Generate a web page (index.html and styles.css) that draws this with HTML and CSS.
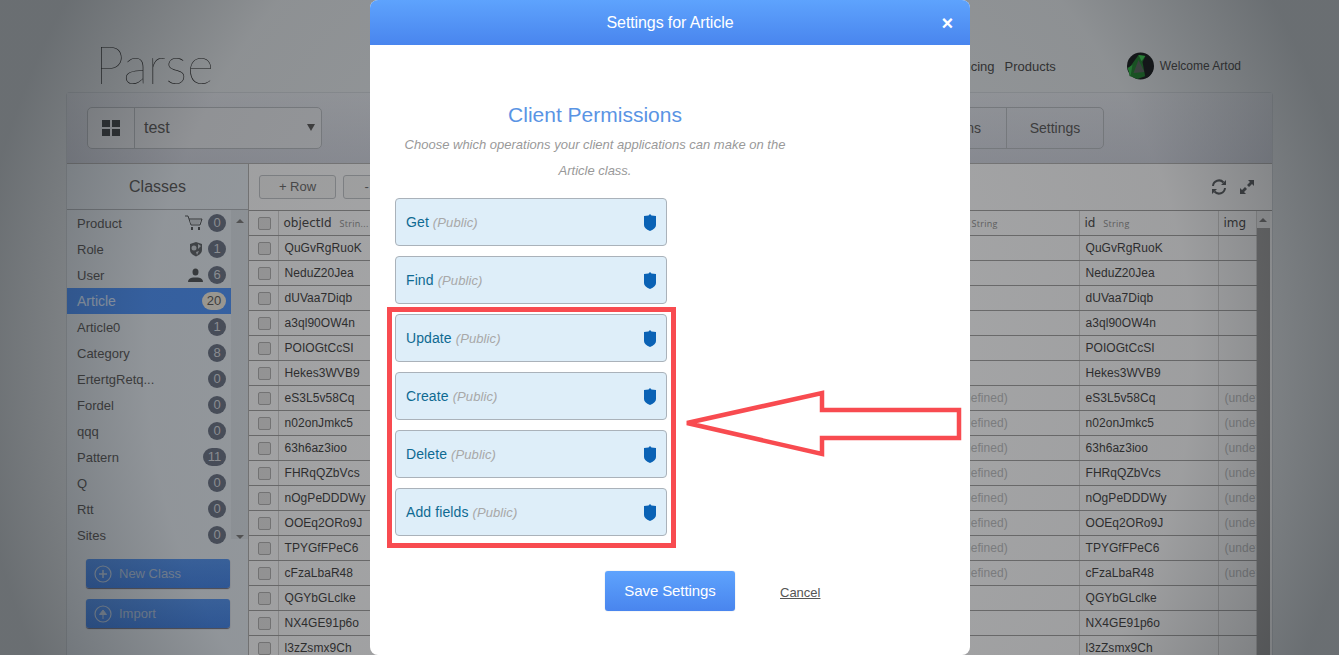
FILE: index.html
```html
<!DOCTYPE html>
<html lang="en">
<head>
    <meta charset="UTF-8">
    <meta name="viewport" content="width=device-width, initial-scale=1.0">
    <title>Settings for Article - Parse</title>
    <link rel="stylesheet" href="styles.css">
</head>
<body>
    <div class="page">
        <div class="top">
            <div class="logo">Parse</div>
            <div class="nav">
                <a>Pricing</a>
                <a>Products</a>
            </div>
            <div class="welcome">
                <svg class="avatar" viewBox="0 0 28 28" width="29" height="28">
                    <circle cx="15" cy="14" r="13.5" fill="#14181a"/>
                    <path d="M3 17 L13 3 L20 4 L23 23 L12 27 L4 24Z" fill="#1d7a2c"/>
                    <path d="M13 8 L19 20 L8 21Z" fill="#55605a"/>
                    <path d="M13 3 L20 4 L16 9Z" fill="#39c94f"/>
                    <path d="M2 16 L7 13 L5 24Z" fill="#2fb345"/>
                    <path d="M21 2 Q29 8 27 19 Q25 25 20 26 L17 10Z" fill="#14181a"/>
                </svg>
                Welcome Artod
            </div>
        </div>

        <div class="panel">
            <div class="appbar">
                <div class="appselect">
                    <div class="appicon">
                        <svg viewBox="0 0 18 16" width="18" height="16"><path d="M0 0h8v7H0zM10 0h8v7h-8zM0 9h8v7H0zM10 9h8v7h-8z" fill="#3f4346"/></svg>
                    </div>
                    <div class="appname">test</div>
                    <div class="caret"></div>
                </div>
                <div class="apptabs">
                    <div class="apptab wide">Actions</div>
                    <div class="apptab">Settings</div>
                </div>
            </div>

            <div class="columns">
                <div class="sidebar">
                    <div class="sidehead">Classes</div>
                    <div class="sidelist">
                        <div class="classes">
                            <div class="cls"><span class="name">Product</span>
                                <svg class="clsicon" viewBox="0 0 18 16" width="18" height="16"><path d="M0 1h3l3 9h9l2-6H4" fill="none" stroke="#4c5053" stroke-width="1"/><path d="M5 5h11l-2 4H6z" fill="#c4cacf"/><path d="M6 12h2v3H6zM13 12h2v3h-2z" fill="#4c5053"/></svg>
                                <span class="count">0</span></div>
                            <div class="cls"><span class="name">Role</span>
                                <svg class="clsicon" viewBox="0 0 14 16" width="14" height="16"><path d="M7 1 L13 3 V9 Q13 13 7 15.500 Q1 13 1 9 V3Z" fill="#5a5f63"/><circle cx="5" cy="7" r="2.500" fill="#c4cacf"/><path d="M9 3 L12 5 L9 8Z" fill="#c4cacf"/><path d="M7 11 L10 10 L8 14Z" fill="#c4cacf"/></svg>
                                <span class="count">1</span></div>
                            <div class="cls"><span class="name">User</span>
                                <svg class="clsicon" viewBox="0 0 15 14" width="15" height="14"><ellipse cx="7.500" cy="4" rx="3" ry="3.500" fill="#4c5053"/><path d="M0 14 Q0 10 5 9.500 H10 Q15 10 15 14Z" fill="#4c5053"/></svg>
                                <span class="count">6</span></div>
                            <div class="cls active"><span class="name">Article</span><span class="count">20</span></div>
                            <div class="cls"><span class="name">Article0</span><span class="count">1</span></div>
                            <div class="cls"><span class="name">Category</span><span class="count">8</span></div>
                            <div class="cls"><span class="name">ErtertgRetq...</span><span class="count">0</span></div>
                            <div class="cls"><span class="name">Fordel</span><span class="count">0</span></div>
                            <div class="cls"><span class="name">qqq</span><span class="count">0</span></div>
                            <div class="cls"><span class="name">Pattern</span><span class="count">11</span></div>
                            <div class="cls"><span class="name">Q</span><span class="count">0</span></div>
                            <div class="cls"><span class="name">Rtt</span><span class="count">0</span></div>
                            <div class="cls"><span class="name">Sites</span><span class="count">0</span></div>
                        </div>
                        <div class="sidescroll">
                            <div class="tri up"></div>
                            <div class="tri down"></div>
                        </div>
                    </div>
                    <div class="sidebtn">
                        <svg viewBox="0 0 18 18" width="18" height="18"><circle cx="9" cy="9" r="8" fill="none" stroke="#b4c6dc" stroke-width="1.200"/><path d="M9 5v8M5 9h8" stroke="#b4c6dc" stroke-width="1.500"/></svg>
                        New Class
                    </div>
                    <div class="sidebtn">
                        <svg viewBox="0 0 18 18" width="18" height="18"><circle cx="9" cy="9" r="8" fill="none" stroke="#b4c6dc" stroke-width="1.200"/><path d="M9 14V7M5.500 9.500 9 5l3.500 4.500z" fill="#b4c6dc" stroke="#b4c6dc"/></svg>
                        Import
                    </div>
                </div>

                <div class="data">
                    <div class="toolbar">
                        <div class="toolbtn">+ Row</div>
                        <div class="toolbtn">- Row</div>
                        <div class="tools">
                            <svg viewBox="0 0 16 16" width="16" height="16"><path d="M2 7 A6 6 0 0 1 12.500 3.500 M14 9 A6 6 0 0 1 3.500 12.500" fill="none" stroke="#55595c" stroke-width="2"/><path d="M10 6h5V1zM6 10H1v5z" fill="#55595c"/></svg>
                            <svg viewBox="0 0 16 16" width="16" height="16"><path d="M9 1h6v6l-2-2-3 3-2-2 3-3zM7 15H1V9l2 2 3-3 2 2-3 3z" fill="#55595c"/></svg>
                        </div>
                    </div>
                    <div class="tablewrap">
                        <table class="grid">
                            <colgroup>
                                <col class="c-check"><col class="c-id"><col class="c-mid"><col class="c-id"><col class="c-id"><col class="c-img">
                            </colgroup>
                            <thead>
                                <tr>
                                    <th><span class="box"></span></th>
                                    <th>objectId <small>Strin...</small></th>
                                    <th></th>
                                    <th class="strcol"><small>String</small></th>
                                    <th>id <small>String</small></th>
                                    <th>img</th>
                                </tr>
                            </thead>
                            <tbody>
                                <tr><td><span class="box"></span></td><td>QuGvRgRuoK</td><td></td><td></td><td>QuGvRgRuoK</td><td></td></tr>
                                <tr><td><span class="box"></span></td><td>NeduZ20Jea</td><td></td><td></td><td>NeduZ20Jea</td><td></td></tr>
                                <tr><td><span class="box"></span></td><td>dUVaa7Diqb</td><td></td><td></td><td>dUVaa7Diqb</td><td></td></tr>
                                <tr><td><span class="box"></span></td><td>a3ql90OW4n</td><td></td><td></td><td>a3ql90OW4n</td><td></td></tr>
                                <tr><td><span class="box"></span></td><td>POIOGtCcSI</td><td></td><td></td><td>POIOGtCcSI</td><td></td></tr>
                                <tr><td><span class="box"></span></td><td>Hekes3WVB9</td><td></td><td></td><td>Hekes3WVB9</td><td></td></tr>
                                <tr><td><span class="box"></span></td><td>eS3L5v58Cq</td><td></td><td class="undef">(undefined)</td><td>eS3L5v58Cq</td><td class="undef">(undefined)</td></tr>
                                <tr><td><span class="box"></span></td><td>n02onJmkc5</td><td></td><td class="undef">(undefined)</td><td>n02onJmkc5</td><td class="undef">(undefined)</td></tr>
                                <tr><td><span class="box"></span></td><td>63h6az3ioo</td><td></td><td class="undef">(undefined)</td><td>63h6az3ioo</td><td class="undef">(undefined)</td></tr>
                                <tr><td><span class="box"></span></td><td>FHRqQZbVcs</td><td></td><td class="undef">(undefined)</td><td>FHRqQZbVcs</td><td class="undef">(undefined)</td></tr>
                                <tr><td><span class="box"></span></td><td>nOgPeDDDWy</td><td></td><td class="undef">(undefined)</td><td>nOgPeDDDWy</td><td class="undef">(undefined)</td></tr>
                                <tr><td><span class="box"></span></td><td>OOEq2ORo9J</td><td></td><td class="undef">(undefined)</td><td>OOEq2ORo9J</td><td class="undef">(undefined)</td></tr>
                                <tr><td><span class="box"></span></td><td>TPYGfFPeC6</td><td></td><td class="undef">(undefined)</td><td>TPYGfFPeC6</td><td class="undef">(undefined)</td></tr>
                                <tr><td><span class="box"></span></td><td>cFzaLbaR48</td><td></td><td class="undef">(undefined)</td><td>cFzaLbaR48</td><td class="undef">(undefined)</td></tr>
                                <tr><td><span class="box"></span></td><td>QGYbGLclke</td><td></td><td></td><td>QGYbGLclke</td><td></td></tr>
                                <tr><td><span class="box"></span></td><td>NX4GE91p6o</td><td></td><td></td><td>NX4GE91p6o</td><td></td></tr>
                                <tr><td><span class="box"></span></td><td>l3zZsmx9Ch</td><td></td><td></td><td>l3zZsmx9Ch</td><td></td></tr>
                            </tbody>
                        </table>
                        <div class="tablescroll">
                            <div class="tri up"></div>
                            <div class="thumb"></div>
                        </div>
                    </div>
                </div>
            </div>
        </div>
    </div>

    <div class="dim"></div>

    <div class="modal">
        <div class="modalhead">
            <span>Settings for Article</span>
            <span class="close">&times;</span>
        </div>
        <div class="modalbody">
            <div class="intro">
                <h2>Client Permissions</h2>
                <p>Choose which operations your client applications can make on the Article class.</p>
            </div>
            <div class="perms">
                <div class="perm"><span>Get <em>(Public)</em></span><svg class="shield" viewBox="0 0 12 17" width="12" height="17"><path d="M6 0 L7.500 1.500 L12 2 V11 Q12 14.500 6 17 Q0 14.500 0 11 V2 L4.500 1.500Z"/></svg></div>
                <div class="perm"><span>Find <em>(Public)</em></span><svg class="shield" viewBox="0 0 12 17" width="12" height="17"><path d="M6 0 L7.500 1.500 L12 2 V11 Q12 14.500 6 17 Q0 14.500 0 11 V2 L4.500 1.500Z"/></svg></div>
                <div class="perm"><span>Update <em>(Public)</em></span><svg class="shield" viewBox="0 0 12 17" width="12" height="17"><path d="M6 0 L7.500 1.500 L12 2 V11 Q12 14.500 6 17 Q0 14.500 0 11 V2 L4.500 1.500Z"/></svg></div>
                <div class="perm"><span>Create <em>(Public)</em></span><svg class="shield" viewBox="0 0 12 17" width="12" height="17"><path d="M6 0 L7.500 1.500 L12 2 V11 Q12 14.500 6 17 Q0 14.500 0 11 V2 L4.500 1.500Z"/></svg></div>
                <div class="perm"><span>Delete <em>(Public)</em></span><svg class="shield" viewBox="0 0 12 17" width="12" height="17"><path d="M6 0 L7.500 1.500 L12 2 V11 Q12 14.500 6 17 Q0 14.500 0 11 V2 L4.500 1.500Z"/></svg></div>
                <div class="perm"><span>Add fields <em>(Public)</em></span><svg class="shield" viewBox="0 0 12 17" width="12" height="17"><path d="M6 0 L7.500 1.500 L12 2 V11 Q12 14.500 6 17 Q0 14.500 0 11 V2 L4.500 1.500Z"/></svg></div>
            </div>
            <div class="actions">
                <div class="save">Save Settings</div>
                <a class="cancel">Cancel</a>
            </div>
        </div>
    </div>

    <div class="redbox"></div>
    <svg class="redarrow" viewBox="0 0 280 68" width="280" height="68">
        <path d="M3 33 L138 3 V20 H275 V48 H138 V64Z" fill="none" stroke="#f84b50" stroke-width="4.500"/>
    </svg>
</body>
</html>
```

FILE: styles.css
```css
html, body {
    height: 100%;
}
body {
    margin: 0;
    overflow: hidden;
    position: relative;
    background: #d8dde0;
    font-family: "Liberation Sans", Arial, sans-serif;
    color: #444;
}
.page {
    padding: 0 66px;
    height: 655px;
    overflow: hidden;
}
.top {
    height: 92px;
    display: flex;
    align-items: center;
    padding-left: 29px;
    padding-top: 40px;
    box-sizing: border-box;
    font-size: 12px;
}
.logo {
    font-family: Lato, sans-serif;
    font-weight: 100;
    font-size: 52px;
    color: #111;
    flex: 1;
    line-height: 50px;
    margin-top: -4px;
}
.nav {
    display: flex;
    gap: 10px;
    margin-right: 69px;
    font-size: 13px;
}
.welcome {
    display: flex;
    align-items: center;
    gap: 6px;
    margin-right: 32px;
}
.panel {
    border: 1px solid #c5cbd0;
    border-bottom: 0;
    border-radius: 4px 4px 0 0;
    box-sizing: border-box;
    width: 1207px;
}
.appbar {
    height: 69px;
    background: linear-gradient(#d8dce2, #c8ccd6);
    border-bottom: 1px solid #aaa;
    display: flex;
    justify-content: space-between;
    align-items: center;
    padding: 0 168px 1px 20px;
}
.appselect {
    display: flex;
    align-items: center;
    width: 235px;
    height: 42px;
    box-sizing: border-box;
    border: 1px solid #aeb3b8;
    border-radius: 5px;
    background: #dcdfe3;
}
.appicon {
    width: 46px;
    height: 100%;
    border-right: 1px solid #aeb3b8;
    display: flex;
    align-items: center;
    justify-content: center;
}
.appname {
    padding: 1px 0 0 9px;
    font-size: 16px;
    color: #555;
    flex: 1;
}
.caret {
    border: 4px solid transparent;
    border-top: 7px solid #555;
    border-bottom: 0;
    margin-right: 6px;
}
.apptabs {
    display: flex;
    height: 40px;
    border: 1px solid #aeb3b8;
    border-radius: 5px;
    font-size: 14px;
    color: #555;
}
.apptab {
    width: 96px;
    padding-top: 1px;
    display: flex;
    align-items: center;
    justify-content: center;
}
.apptab.wide {
    border-right: 1px solid #aeb3b8;
}
.columns {
    display: flex;
}
.sidebar {
    width: 181px;
    border-right: 1px solid #aaa;
    background: #dde4ea;
    height: 500px;
}
.sidehead {
    height: 45px;
    line-height: 46px;
    text-align: center;
    font-size: 16px;
    color: #555;
    border-bottom: 1px solid #a8adb2;
}
.sidelist {
    display: flex;
}
.classes {
    width: 164px;
}
.cls {
    height: 26px;
    display: flex;
    align-items: center;
    gap: 5px;
    padding: 0 5px 0 10px;
    font-size: 13px;
    color: #555;
    box-sizing: border-box;
}
.cls .name {
    flex: 1;
}
.cls.active {
    background: #4a8ef2;
    color: #cfe0f8;
    font-size: 14px;
}
.count {
    min-width: 18px;
    height: 18px;
    border-radius: 9px;
    background: #666f80;
    color: #d0d4da;
    font-size: 13px;
    line-height: 18px;
    text-align: center;
}
.cls:nth-child(10) .count {
    min-width: 23px;
}
.active .count {
    min-width: 24px;
    background: #e9e4d8;
    color: #555;
}
.sidescroll {
    flex: 1;
    display: flex;
    flex-direction: column;
    justify-content: space-between;
    align-items: center;
    padding: 9px 0 0;
    height: 329px;
    box-sizing: border-box;
    background: #d3dae0;
}
.tri.up {
    border: 4px solid transparent;
    border-bottom: 4px solid #777;
    border-top: 0;
}
.tri.down {
    border: 4px solid transparent;
    border-top: 4px solid #777;
    border-bottom: 0;
}
.sidebtn {
    margin: 11px 18px 11px 19px;
    height: 29px;
    border-radius: 3px;
    background: linear-gradient(#4f8ee8, #3f7fe0);
    color: #a9bed8;
    font-size: 13px;
    display: flex;
    align-items: center;
    gap: 7px;
    padding-left: 8px;
    box-shadow: 0 1px 1px #667;
}
.data {
    flex: 1;
    min-width: 0;
    background: #f2f3f4;
}
.toolbar {
    height: 46px;
    display: flex;
    align-items: center;
    gap: 7px;
    padding: 0 17px 0 10px;
    border-bottom: 1px solid #999;
}
.toolbtn {
    width: 77px;
    height: 24px;
    box-sizing: border-box;
    border: 1px solid #b8bcc0;
    border-radius: 3px;
    background: #eceded;
    font-size: 13px;
    color: #666;
    text-align: center;
    line-height: 22px;
}
.tools {
    margin-left: auto;
    display: flex;
    gap: 12px;
}
.tablewrap {
    display: flex;
}
.grid {
    table-layout: fixed;
    width: 1007px;
    border-collapse: collapse;
    font-size: 12px;
    letter-spacing: .05px;
    color: #3c3c3c;
}
.c-check { width: 29px; }
.c-id { width: 139px; }
.c-mid { width: 523px; }
.c-img { width: 38px; }
.grid th, .grid td {
    height: 24px;
    padding: 0 6px;
    border-bottom: 1px solid #999;
    border-right: 1px solid #ccc;
    text-align: left;
    white-space: nowrap;
    overflow: hidden;
}
.grid th:first-child, .grid td:first-child {
    padding: 0 0 0 9px;
}
.grid th {
    font-family: "DejaVu Sans", sans-serif;
    font-weight: normal;
    font-size: 12px;
    color: #444;
    letter-spacing: 0;
    padding-left: 5px;
}
.grid th small {
    font-family: "Open Sans", sans-serif;
    font-size: 9px;
    color: #888;
    letter-spacing: .3px;
    margin-left: 4px;
}
.grid .strcol small {
    display: block;
    margin-left: 26px;
}
.grid .undef {
    color: #b4b6b8;
}
.grid td:nth-child(4) {
    text-align: right;
    padding-right: 71px;
    overflow: visible;
}
.box {
    display: block;
    width: 11px;
    height: 11px;
    border: 1px solid #aaa;
    border-radius: 2px;
    background: #ddd;
}
.tablescroll {
    width: 13px;
    background: #e8e9ea;
    display: flex;
    flex-direction: column;
    align-items: center;
    padding-top: 7px;
}
.thumb {
    width: 100%;
    flex: 1;
    margin-top: 6px;
    background: #9c9c9c;
    height: 430px;
}
.dim {
    position: absolute;
    inset: 0;
    background: radial-gradient(ellipse 52% 110% at 50% 55%, rgba(20, 20, 22, .32) 0%, rgba(20, 20, 22, .38) 75%, rgba(20, 24, 28, .56) 100%);
}
.modal {
    position: absolute;
    left: 370px;
    top: 0;
    width: 600px;
    height: 655px;
    background: #fff;
    border-radius: 8px;
    overflow: hidden;
}
.modalhead {
    height: 45px;
    background: linear-gradient(#5ea3fd, #4985ee);
    color: #fff;
    font-size: 16px;
    letter-spacing: -.1px;
    display: flex;
    align-items: center;
    justify-content: center;
    position: relative;
}
.close {
    position: absolute;
    right: 17px;
    top: 12px;
    font-size: 20px;
    font-weight: bold;
    line-height: 22px;
}
.modalbody {
    padding: 55px 0 0 25px;
}
.intro {
    width: 400px;
    text-align: center;
}
.intro h2 {
    margin: 0;
    font-size: 21px;
    font-weight: normal;
    line-height: 30px;
    color: #5a94e4;
}
.intro p {
    margin: 0 auto;
    padding-top: 2px;
    width: 390px;
    font-size: 13px;
    font-style: italic;
    line-height: 26px;
    color: #999;
}
.perms {
    margin-top: 14px;
    width: 272px;
    display: flex;
    flex-direction: column;
    gap: 10px;
}
.perm {
    height: 48px;
    box-sizing: border-box;
    border: 1px solid #aab2ba;
    border-radius: 4px;
    background: #deeef9;
    display: flex;
    align-items: center;
    justify-content: space-between;
    padding: 0 10px;
    font-size: 14px;
    letter-spacing: .1px;
    color: #0e6a92;
}
.perm em {
    font-size: 13px;
    color: #a8a8a8;
}
.shield {
    fill: #0a62b5;
}
.actions {
    display: flex;
    align-items: center;
    margin: 35px 0 0 210px;
    gap: 45px;
}
.save {
    width: 130px;
    height: 40px;
    border-radius: 3px;
    background: linear-gradient(#5ea3fd, #4985ee);
    color: #fff;
    font-size: 15px;
    letter-spacing: -.1px;
    text-align: center;
    line-height: 39px;
    box-shadow: 0 0 1px #9ab;
}
.cancel {
    font-size: 13px;
    color: #555;
    text-decoration: underline;
    padding-top: 2px;
}
.redbox {
    position: absolute;
    left: 387px;
    top: 307px;
    width: 289px;
    height: 241px;
    box-sizing: border-box;
    border: 5px solid #f84b50;
}
.redarrow {
    position: absolute;
    left: 684px;
    top: 390px;
}
```
